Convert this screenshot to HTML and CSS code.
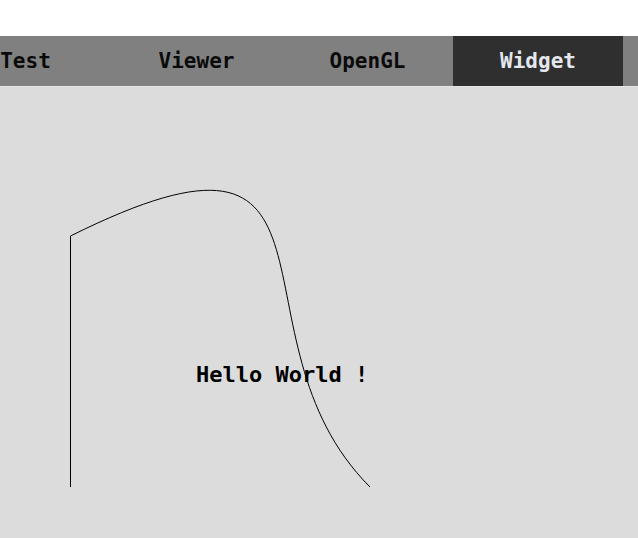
FILE: index.html
```html
<!DOCTYPE html>
<html>
<head>
<meta charset="utf-8">
<link rel="stylesheet" href="styles.css">
</head>
<body>
<div class="app">
  <div class="topstrip"></div>
  <div class="tabbar">
    <div class="tab first">Test</div>
    <div class="tab">Viewer</div>
    <div class="tab">OpenGL</div>
    <div class="tab active">Widget</div>
  </div>
  <div class="content">
    <svg class="canvas" width="638" height="451" viewBox="0 0 638 451">
      <path d="M70.5 400 L70.5 149 C370 0 220 250 370 400" fill="none" stroke="#000" stroke-width="1"/>
      <text x="196" y="295" class="hello">Hello World !</text>
    </svg>
  </div>
</div>
</body>
</html>
```
FILE: styles.css
```css
html, body {
  margin: 0;
  padding: 0;
  background: #ffffff;
  overflow: hidden;
}
.app {
  width: 638px;
  height: 538px;
  display: flex;
  flex-direction: column;
}
.topstrip {
  height: 36px;
  background: #ffffff;
  flex: none;
}
.tabbar {
  height: 50px;
  flex: none;
  display: flex;
  background: #808080;
  overflow: hidden;
}
.tab {
  flex: none;
  width: 171px;
  display: flex;
  align-items: center;
  justify-content: center;
  font-family: "DejaVu Sans Mono", monospace;
  font-weight: bold;
  font-size: 21px;
  color: #0a0a0a;
}
.tab.first {
  margin-left: -60px;
}
.tab.active {
  width: 170px;
  background: #2f2f2f;
  color: #e4e8ee;
}
.content {
  flex: 1;
  background: #dcdcdc;
  border-top: 1px solid #e6e6e6;
  overflow: hidden;
}
.canvas {
  display: block;
}
.hello {
  font-family: "DejaVu Sans Mono", monospace;
  font-weight: bold;
  font-size: 22px;
  fill: #000;
}
```
